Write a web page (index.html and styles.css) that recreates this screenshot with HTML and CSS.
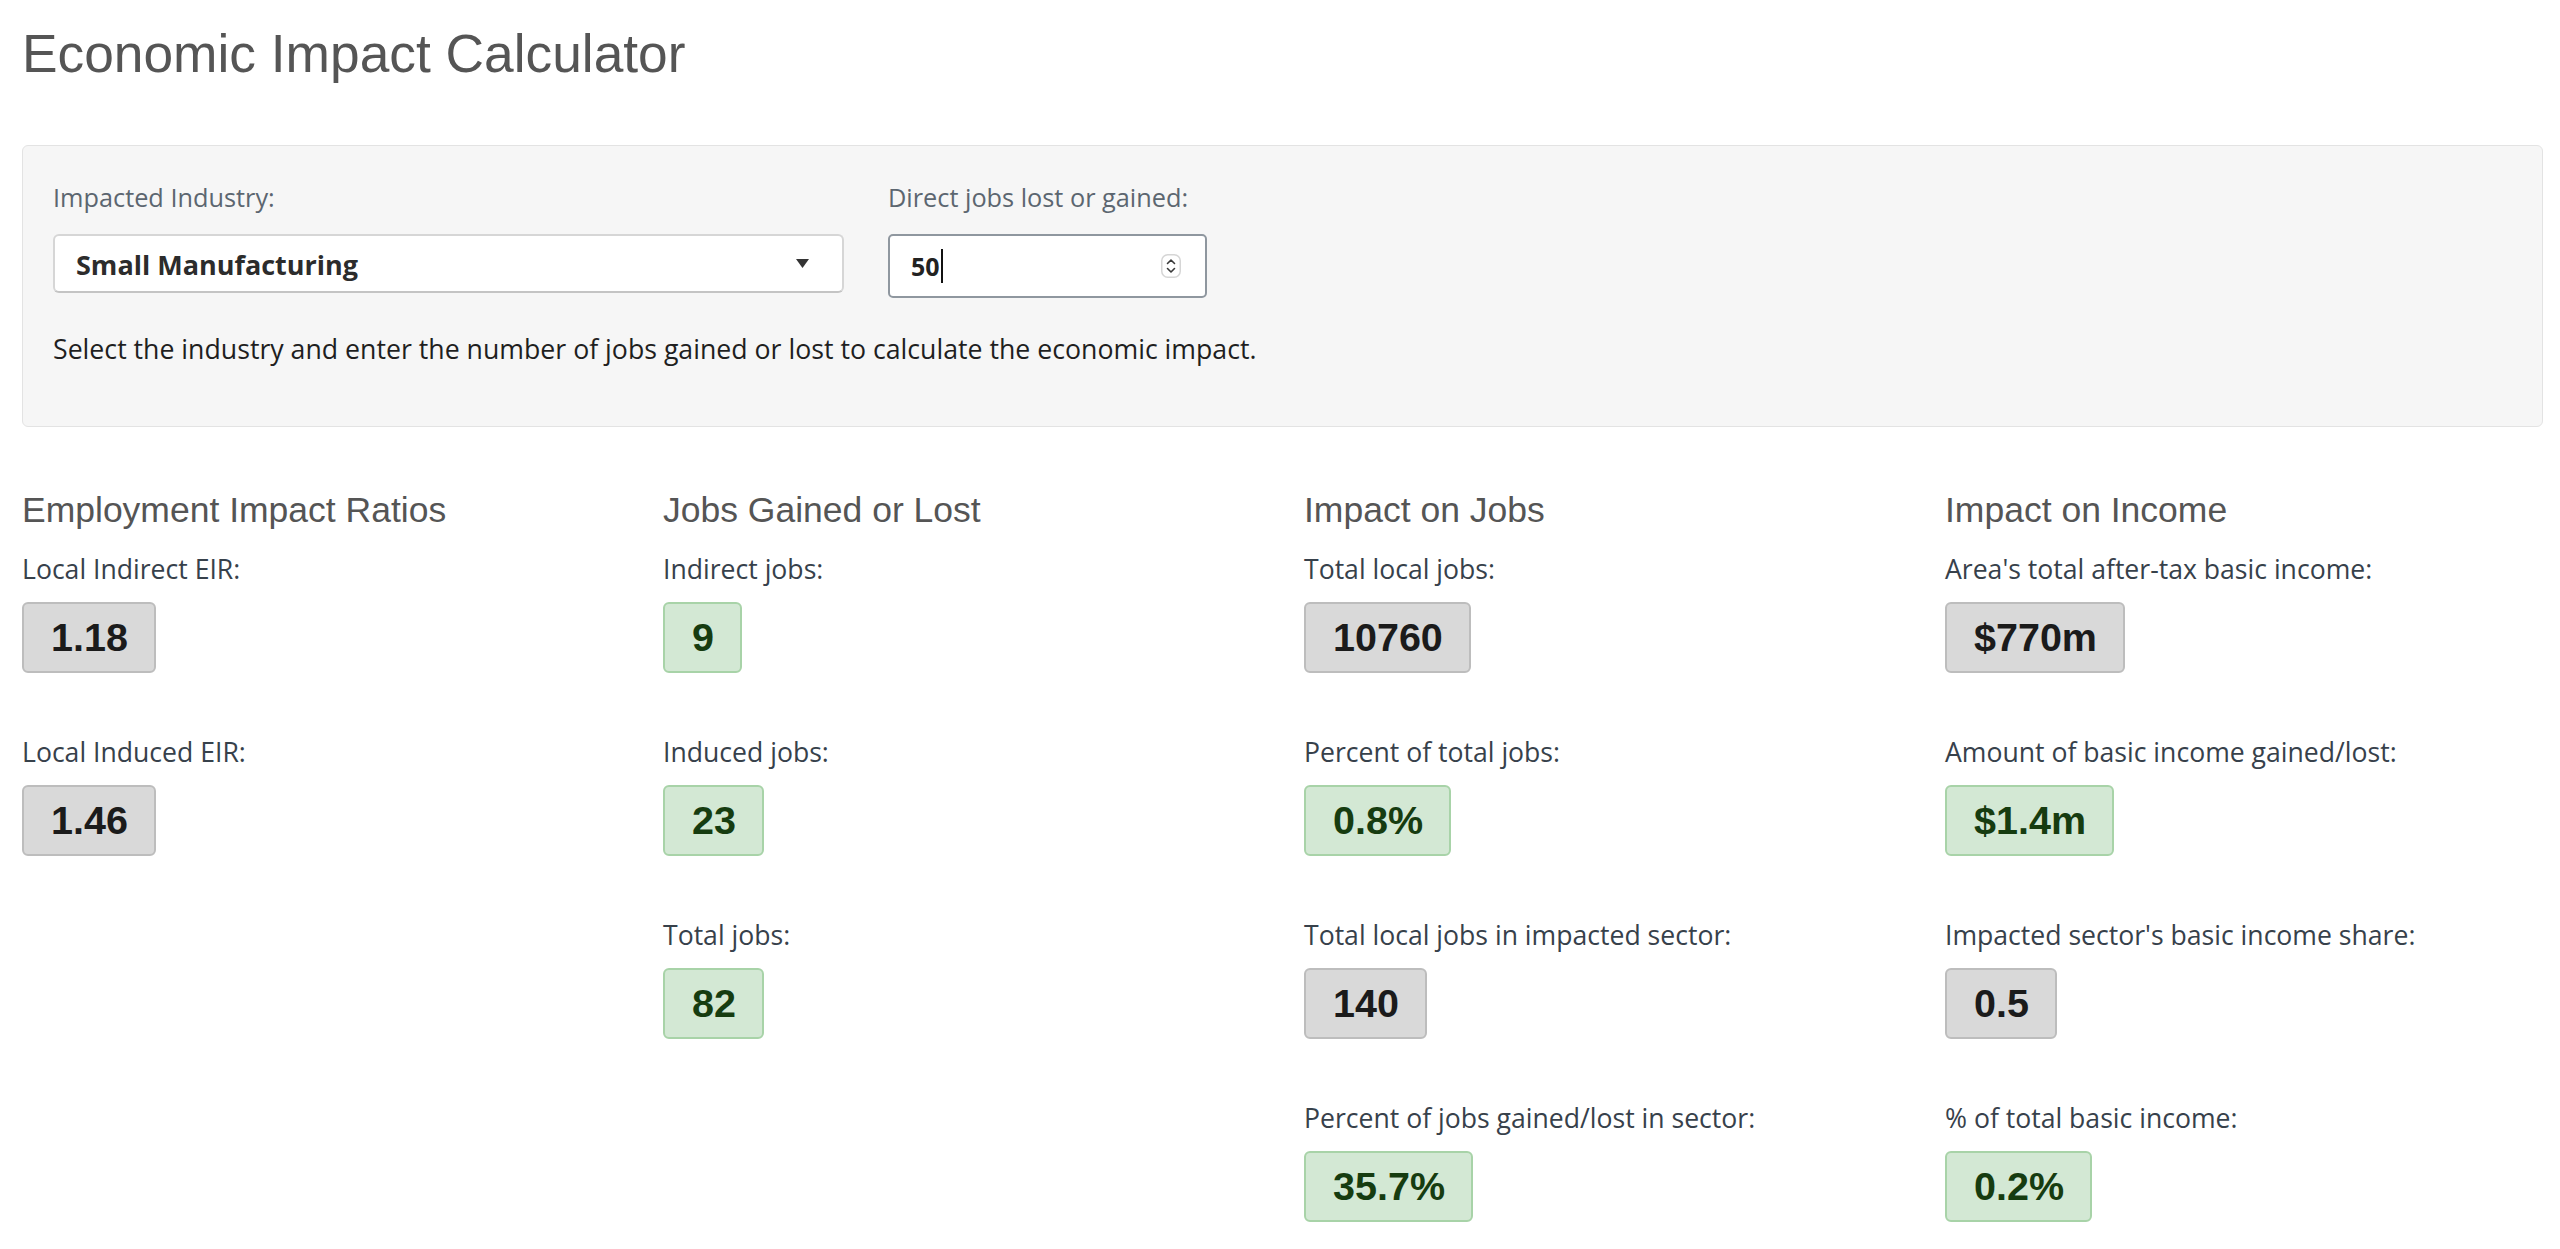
FILE: index.html
```html
<!DOCTYPE html>
<html lang="en">
<head>
<meta charset="utf-8">
<title>Economic Impact Calculator</title>
<link rel="stylesheet" href="styles.css">
</head>
<body>
<div class="page">
  <h1 class="title">Economic Impact Calculator</h1>

  <div class="well">
    <div class="form-row">
      <div class="group group-industry">
        <div class="form-label">Impacted Industry:</div>
        <div class="select">
          <span class="select-text">Small Manufacturing</span>
          <svg class="select-arrow" width="13" height="9" viewBox="0 0 13 9"><path d="M0 0 H13 L6.5 9 Z" fill="#333"/></svg>
        </div>
      </div>
      <div class="group group-jobs">
        <div class="form-label">Direct jobs lost or gained:</div>
        <div class="num-input">
          <span class="num-val">50</span><span class="caret"></span>
          <svg class="spinner" width="20" height="24" viewBox="0 0 20 24">
            <rect x="0.75" y="0.75" width="18.5" height="22.5" rx="6" fill="#fff" stroke="#d6d6d6" stroke-width="1.5"/>
            <path d="M6.5 9.5 L10 6 L13.5 9.5" fill="none" stroke="#3a3a3a" stroke-width="1.6" stroke-linecap="round" stroke-linejoin="round"/>
            <path d="M6.5 14.5 L10 18 L13.5 14.5" fill="none" stroke="#3a3a3a" stroke-width="1.6" stroke-linecap="round" stroke-linejoin="round"/>
          </svg>
        </div>
      </div>
    </div>
    <p class="hint">Select the industry and enter the number of jobs gained or lost to calculate the economic impact.</p>
  </div>

  <div class="results">
    <div class="col">
      <h2 class="col-title">Employment Impact Ratios</h2>
      <div class="items">
        <div class="item"><div class="item-label">Local Indirect EIR:</div><div class="box box-gray">1.18</div></div>
        <div class="item"><div class="item-label">Local Induced EIR:</div><div class="box box-gray">1.46</div></div>
      </div>
    </div>
    <div class="col">
      <h2 class="col-title">Jobs Gained or Lost</h2>
      <div class="items">
        <div class="item"><div class="item-label">Indirect jobs:</div><div class="box box-green">9</div></div>
        <div class="item"><div class="item-label">Induced jobs:</div><div class="box box-green">23</div></div>
        <div class="item"><div class="item-label">Total jobs:</div><div class="box box-green">82</div></div>
      </div>
    </div>
    <div class="col">
      <h2 class="col-title">Impact on Jobs</h2>
      <div class="items">
        <div class="item"><div class="item-label">Total local jobs:</div><div class="box box-gray">10760</div></div>
        <div class="item"><div class="item-label">Percent of total jobs:</div><div class="box box-green">0.8%</div></div>
        <div class="item"><div class="item-label">Total local jobs in impacted sector:</div><div class="box box-gray">140</div></div>
        <div class="item"><div class="item-label">Percent of jobs gained/lost in sector:</div><div class="box box-green">35.7%</div></div>
      </div>
    </div>
    <div class="col">
      <h2 class="col-title">Impact on Income</h2>
      <div class="items">
        <div class="item"><div class="item-label">Area's total after-tax basic income:</div><div class="box box-gray">$770m</div></div>
        <div class="item"><div class="item-label">Amount of basic income gained/lost:</div><div class="box box-green">$1.4m</div></div>
        <div class="item"><div class="item-label">Impacted sector's basic income share:</div><div class="box box-gray">0.5</div></div>
        <div class="item"><div class="item-label">% of total basic income:</div><div class="box box-green">0.2%</div></div>
      </div>
    </div>
  </div>
</div>
</body>
</html>
```

FILE: styles.css
```css
html, body {
  margin: 0;
  padding: 0;
  background: #ffffff;
}

.page {
  padding: 24px 17px 0 22px;
}

.title {
  margin: 0 0 61px;
  font-family: "Liberation Sans", Arial, sans-serif;
  font-weight: 400;
  font-size: 53.3px;
  line-height: 60px;
  color: #555555;
}

.well {
  background: #f6f6f6;
  border: 1px solid #e3e3e3;
  border-radius: 6px;
  padding: 34px 30px 59px;
}

.form-row {
  display: flex;
  gap: 44px;
  align-items: flex-start;
}

.group-industry {
  width: 791px;
}

.group-jobs {
  width: 319px;
}

.form-label {
  font-family: "Open Sans", sans-serif;
  font-size: 25.3px;
  line-height: 35px;
  color: #5c6670;
  margin-bottom: 19px;
}

.select {
  box-sizing: border-box;
  height: 59px;
  display: flex;
  align-items: center;
  justify-content: space-between;
  padding: 0 33px 0 21px;
  background: #ffffff;
  border: 2px solid #d6d6d6;
  border-bottom-color: #c4c4c4;
  border-radius: 6px;
}

.select-text {
  font-family: "Open Sans", sans-serif;
  font-weight: 700;
  font-size: 27px;
  color: #2c2c2c;
  position: relative;
  top: 1px;
}

.num-input {
  box-sizing: border-box;
  height: 64px;
  display: flex;
  align-items: center;
  padding: 0 24px 0 21px;
  background: #ffffff;
  border: 2px solid #8f979f;
  border-radius: 5px;
}

.num-val {
  font-family: "Open Sans", sans-serif;
  font-weight: 700;
  font-size: 25px;
  color: #222222;
}

.caret {
  width: 2px;
  height: 34px;
  background: #111111;
  margin-left: 1px;
}

.spinner {
  margin-left: auto;
}

.hint {
  margin: 33px 0 0;
  font-family: "Open Sans", sans-serif;
  font-size: 26.7px;
  line-height: 36px;
  color: #1f1f1f;
}

.results {
  margin-top: 64px;
  display: grid;
  grid-template-columns: 641px 641px 641px 1fr;
}

.col-title {
  margin: 0 0 20px;
  font-family: "Liberation Sans", Arial, sans-serif;
  font-weight: 400;
  font-size: 35.5px;
  line-height: 39px;
  color: #555555;
}

.items {
  display: flex;
  flex-direction: column;
  align-items: flex-start;
  gap: 60px;
}

.item {
  display: flex;
  flex-direction: column;
  align-items: flex-start;
}

.item-label {
  font-family: "Open Sans", sans-serif;
  font-size: 26.6px;
  line-height: 38px;
  color: #37414b;
  margin-bottom: 14px;
}

.box {
  font-family: "Liberation Sans", Arial, sans-serif;
  font-weight: 700;
  font-size: 39.5px;
  line-height: 45px;
  padding: 11px 26px 11px 27px;
  border: 2px solid;
  border-radius: 6px;
}

.box-gray {
  background: #d9d9d9;
  border-color: #bdbdbd;
  color: #1b1b1b;
}

.box-green {
  background: #d3e8d4;
  border-color: #a8d3a8;
  color: #163c10;
}
```
